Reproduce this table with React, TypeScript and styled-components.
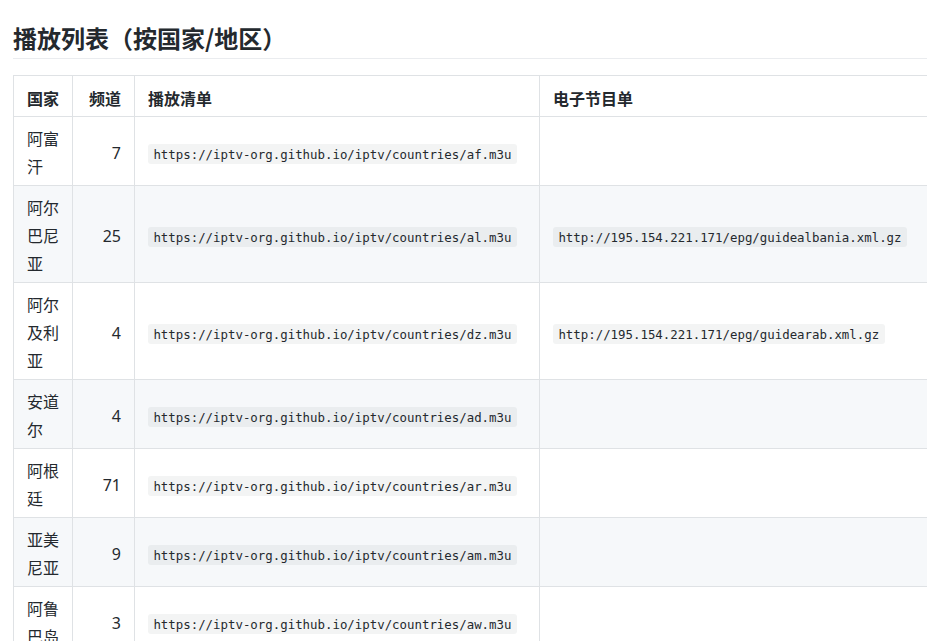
import React from "react";
import styled, { createGlobalStyle } from "styled-components";

const GlobalStyle = createGlobalStyle`
  html, body {
    margin: 0;
    padding: 0;
    background: #fff;
  }
  body {
    font-family: "Noto Sans", "Noto Sans CJK SC", sans-serif;
    font-size: 16px;
    color: #24292e;
  }
`;

const Page = styled.div`
  padding: 0 13px;
  width: 914px;
`;

const Title = styled.h2`
  margin: 0 0 16px;
  padding: 23px 0 5px;
  font-size: 24px;
  line-height: 30px;
  font-weight: 700;
  font-family: "Noto Sans CJK SC", sans-serif;
  border-bottom: 1px solid #eaecef;
`;

const TableWrap = styled.div`
  width: 914px;
  overflow: hidden;
`;

const Table = styled.table`
  border-collapse: collapse;
  border-spacing: 0;
  table-layout: fixed;
  width: 928px;
`;

const Cell = styled.td<{ $align?: "left" | "right" }>`
  padding: 8px 13px 4px;
  border: 1px solid #dfe2e5;
  line-height: 28px;
  vertical-align: middle;
  text-align: ${(p) => p.$align || "left"};
  font-family: "Noto Sans", "Noto Sans CJK SC", sans-serif;
  word-break: break-all;
`;

const HeadCell = styled(Cell).attrs({ as: "th" })`
  font-weight: 700;
  font-family: "Noto Sans CJK SC", sans-serif;
`;

const Row = styled.tr<{ $striped?: boolean }>`
  background: ${(p) => (p.$striped ? "#f6f8fa" : "#fff")};
`;

const Code = styled.code`
  font-family: "DejaVu Sans Mono", "Liberation Mono", monospace;
  font-size: 12.4px;
  padding: 2.5px 5.4px;
  background: rgba(27, 31, 35, 0.05);
  border-radius: 3px;
  white-space: nowrap;
`;

type Country = {
  name: string;
  channels: number;
  code: string;
  epg?: string;
};

const countries: Country[] = [
  { name: "阿富汗", channels: 7, code: "af" },
  {
    name: "阿尔巴尼亚",
    channels: 25,
    code: "al",
    epg: "http://195.154.221.171/epg/guidealbania.xml.gz",
  },
  {
    name: "阿尔及利亚",
    channels: 4,
    code: "dz",
    epg: "http://195.154.221.171/epg/guidearab.xml.gz",
  },
  { name: "安道尔", channels: 4, code: "ad" },
  { name: "阿根廷", channels: 71, code: "ar" },
  { name: "亚美尼亚", channels: 9, code: "am" },
  { name: "阿鲁巴岛", channels: 3, code: "aw" },
  { name: "澳大利亚", channels: 42, code: "au" },
];

export default function App() {
  return (
    <>
      <GlobalStyle />
      <Page>
        <Title>播放列表（按国家/地区）</Title>
        <TableWrap>
          <Table>
            <colgroup>
              <col style={{ width: 59 }} />
              <col style={{ width: 62 }} />
              <col style={{ width: 405 }} />
              <col style={{ width: 402 }} />
            </colgroup>
            <thead>
              <Row>
                <HeadCell>国家</HeadCell>
                <HeadCell $align="right">频道</HeadCell>
                <HeadCell>播放清单</HeadCell>
                <HeadCell>电子节目单</HeadCell>
              </Row>
            </thead>
            <tbody>
              {countries.map((c, i) => (
                <Row key={c.code} $striped={i % 2 === 1}>
                  <Cell>{c.name}</Cell>
                  <Cell $align="right">{c.channels}</Cell>
                  <Cell>
                    <Code>{`https://iptv-org.github.io/iptv/countries/${c.code}.m3u`}</Code>
                  </Cell>
                  <Cell>{c.epg && <Code>{c.epg}</Code>}</Cell>
                </Row>
              ))}
            </tbody>
          </Table>
        </TableWrap>
      </Page>
    </>
  );
}
